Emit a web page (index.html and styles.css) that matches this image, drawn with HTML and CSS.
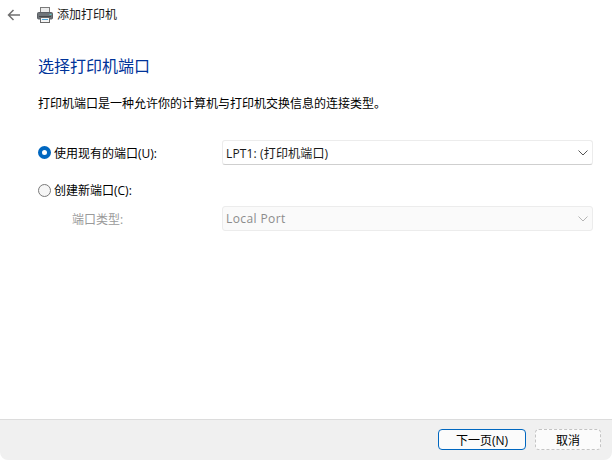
FILE: index.html
```html
<!DOCTYPE html>
<html lang="zh-CN">
<head>
<meta charset="utf-8">
<title>添加打印机</title>
<link rel="stylesheet" href="styles.css">
</head>
<body>
<div class="window">
  <header class="topbar">
    <svg class="back" width="16" height="16" viewBox="0 0 16 16"><path d="M14 8H2.5M7.5 3L2.5 8l5 5" fill="none" stroke="#707070" stroke-width="1.5"/></svg>
    <svg class="printer" width="16" height="16" viewBox="0 0 16 16">
      <rect x="3.5" y="0.5" width="9" height="5" fill="#ececec" stroke="#7a7a7a"/>
      <rect x="0.5" y="5.5" width="15" height="6.5" rx="1" fill="#70757a" stroke="#5c6066"/>
      <rect x="2" y="9" width="12" height="1" fill="#45484c"/>
      <rect x="3.5" y="10.5" width="9" height="5" fill="#f4f4f4" stroke="#6a6a6a"/>
      <rect x="5" y="12" width="6" height="1" fill="#4aa3d8"/>
      <rect x="12.5" y="7" width="2" height="1" fill="#57d0c8"/>
    </svg>
    <span class="apptitle">添加打印机</span>
  </header>
  <main class="content">
    <h1 class="heading">选择打印机端口</h1>
    <p class="desc">打印机端口是一种允许你的计算机与打印机交换信息的连接类型。</p>
    <div class="row row-first">
      <label class="choice"><span class="radio radio-on"></span>使用现有的端口(U):</label>
      <div class="select"><span class="value">LPT1: (打印机端口)</span><svg width="10" height="6" viewBox="0 0 10 6"><path d="M0.5 0.5L5 5l4.5-4.5" fill="none" stroke="#555" stroke-width="1"/></svg></div>
    </div>
    <div class="row row-plain">
      <label class="choice"><span class="radio"></span>创建新端口(C):</label>
    </div>
    <div class="row row-sub">
      <label class="sublabel">端口类型:</label>
      <div class="select select-off"><span class="value-off">Local Port</span><svg width="10" height="6" viewBox="0 0 10 6"><path d="M0.5 0.5L5 5l4.5-4.5" fill="none" stroke="#b5b5b5" stroke-width="1"/></svg></div>
    </div>
  </main>
  <footer class="footer">
    <button class="btn btn-primary">下一页(N)</button>
    <button class="btn btn-ghost">取消</button>
  </footer>
</div>
</body>
</html>
```
FILE: styles.css
```css
* { box-sizing: border-box; }
html, body { margin: 0; height: 100%; background: #fff; }
body { font-family: "Open Sans", "Noto Sans CJK SC", sans-serif; font-size: 12px; color: #1a1a1a; }
.window { width: 612px; height: 460px; display: flex; flex-direction: column; overflow: hidden; }
.topbar { height: 30px; display: flex; align-items: center; padding-left: 6px; flex: none; }
.back { margin-right: 15px; }
.printer { margin-right: 4px; }
.apptitle { line-height: 16px; }
.content { flex: 1; padding: 24px 19px 0 38px; }
.heading { margin: 0; font-size: 16px; font-weight: 400; line-height: 24px; color: #003399; }
.desc { margin: 17px 0 0; line-height: 18px; color: #000; }
.row { display: flex; align-items: center; }
.row-first { margin-top: 27px; }
.row-plain { margin-top: 16px; height: 18px; }
.row-sub { margin-top: 7px; }
.choice { width: 184px; display: flex; align-items: center; color: #000; }
.radio { width: 13px; height: 13px; border-radius: 50%; border: 1px solid #7a7a7a; background: #f6f6f6; margin-right: 3px; flex: none; }
.radio-on { border: 4px solid #0067c0; background: #fff; }
.sublabel { width: 184px; padding-left: 34px; color: #9a9a9a; }
.select { width: 371px; height: 25px; display: flex; align-items: center; justify-content: space-between; padding: 0 4px 0 3px; background: #fff; border: 1px solid #ececec; border-bottom: 1px solid #cfcfcf; border-radius: 3px; color: #1a1a1a; }
.select-off { background: #fafafa; border-color: #ececec; color: #8c8c8c; }
.value { letter-spacing: 0.15px; }
.value-off { letter-spacing: 0.4px; }
.footer { height: 41px; flex: none; display: flex; align-items: flex-start; justify-content: flex-end; gap: 9px; padding: 9px 11px 0 0; background: #f0f0f0; border-top: 1px solid #dcdcdc; border-radius: 0 0 8px 8px; }
.btn { font: inherit; height: 21px; padding: 0; color: #000; background: #fbfbfb; border-radius: 4px; }
.btn-primary { width: 88px; border: 1px solid #0067c0; }
.btn-ghost { width: 66px; border: 1px dashed #c4c4c4; }
```
